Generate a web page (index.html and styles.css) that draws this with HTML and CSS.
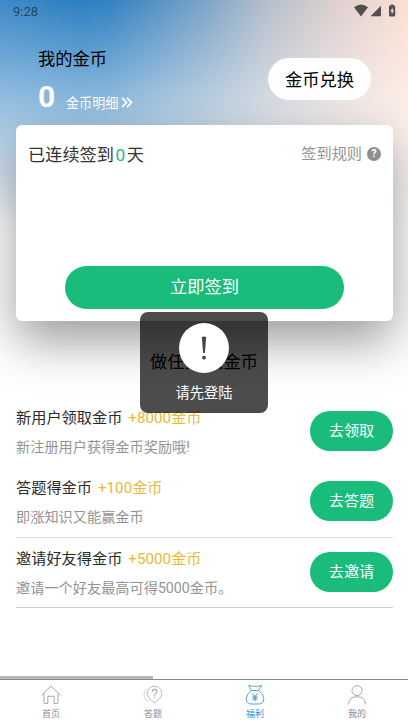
FILE: index.html
```html
<!DOCTYPE html>
<html lang="zh-CN">
<head>
<meta charset="utf-8">
<title>福利</title>
<link rel="stylesheet" href="styles.css">
</head>
<body>
<div class="app">
  <div class="status">
    <span class="time">9:28</span>
    <svg class="status-icons" width="42" height="14" viewBox="0 0 42 14" fill="#505050">
      <path d="M0 3.2Q7-2.2 14 3.2L7 12.4Z"/>
      <path d="M27 1.8V12.2H16.5Z"/>
      <path d="M35.8 1.4h1V.4h2.600v1h1q.8 0 .8.8v9.400q0 .8-.8.8h-4.600q-.8 0-.8-.8V2.200q0-.8.8-.8z"/>
      <path d="M38.700 3.200l-2.500 4.300h1.500v3.100l2.500-4.300h-1.500z" fill="#e5d9d7"/>
    </svg>
  </div>
  <header class="header">
    <div class="balance">
      <div class="balance-title">我的金币</div>
      <div class="balance-row">
        <span class="amount">0</span>
        <span class="detail">金币明细</span>
        <svg class="arrows" width="12" height="11" viewBox="0 0 12 11" fill="none" stroke="#fff" stroke-width="1.700"><path d="M1 .8l4.500 4.700L1 10.200M6 .8l4.500 4.700L6 10.200"/></svg>
      </div>
    </div>
    <div class="exchange">金币兑换</div>
  </header>
  <section class="card">
    <div class="card-head">
      <div class="streak">已连续签到<span class="days">0</span>天</div>
      <div class="rules">签到规则<span class="help">?</span></div>
    </div>
    <div class="sign">立即签到</div>
  </section>
  <h2 class="tasks-title">做任务 赚金币</h2>
  <main class="tasks">
    <div class="task first">
      <div><div class="name">新用户领取金币<span class="coins">+8000金币</span></div><div class="desc">新注册用户获得金币奖励哦!</div></div>
      <div class="go">去领取</div>
    </div>
    <div class="task">
      <div><div class="name">答题得金币<span class="coins">+100金币</span></div><div class="desc">即涨知识又能赢金币</div></div>
      <div class="go">去答题</div>
    </div>
    <div class="task last">
      <div><div class="name">邀请好友得金币<span class="coins">+5000金币</span></div><div class="desc">邀请一个好友最高可得5000金币。</div></div>
      <div class="go">去邀请</div>
    </div>
  </main>
  <div class="progress"></div>
  <nav class="tabs">
    <div class="tab">
      <svg width="22" height="22" viewBox="0 0 22 22" fill="none" stroke="#a9a9a9"><path d="M1.200 11.500L11 2l9.800 9.500M4 9.500v9.300q0 .7.700.7h3.100v-7.200h6.400v7.200h3.100q.7 0 .7-.7V9.500"/></svg>
      <span>首页</span>
    </div>
    <div class="tab">
      <svg width="22" height="22" viewBox="0 0 22 22" fill="none" stroke="#a9a9a9"><path d="M12.500 19L9.200 16A7.300 7.300 0 1 1 15.800 16Z" stroke-width=".8"/><path d="M10.100 7.800q.1-2.500 2.500-2.500t2.400 2.300q0 1.300-1.400 2.100-1 .6-1 1.900M12.600 12.800v1.200" stroke="#888"/><path d="M4.500 5.500Q1.500 8 2.200 12t5.300 5.500" stroke-width=".8" stroke-dasharray="2 1"/></svg>
      <span>答题</span>
    </div>
    <div class="tab active">
      <svg width="22" height="22" viewBox="0 0 22 22" fill="none" stroke="#3b8ccc"><path d="M7.500 6.500L4.500 1.500l4 .8h5.200l4-.8-3.200 5M7.500 6.500h7q5.300 3.300 5.300 8.200 0 5.300-5.300 5.300H7.500q-5.300 0-5.300-5.300Q2.200 9.800 7.500 6.500Z" stroke-width=".8"/><path d="M8.400 9.500l2.600 3 2.600-3M11 12.500v4.800M8.300 13h5.400M8.300 15h5.400"/></svg>
      <span>福利</span>
    </div>
    <div class="tab">
      <svg width="22" height="22" viewBox="0 0 22 22" fill="none" stroke="#a9a9a9"><circle cx="11" cy="6.600" r="5"/><path d="M2.700 20.500v-1.300q.5-6.500 8.300-6.500t8.300 6.500v1.300"/></svg>
      <span>我的</span>
    </div>
  </nav>
  <div class="toast">
    <div class="toast-icon"><svg width="8" height="26" viewBox="0 0 8 26" fill="#484848"><path d="M1.800 2Q4 .8 6.200 2L4.900 18H3.100Z"/><circle cx="4" cy="22.700" r="1.900"/></svg></div>
    <div>请先登陆</div>
  </div>
</div>
</body>
</html>
```
FILE: styles.css
```css
* { box-sizing: border-box; }
body {
  margin: 0;
  font-family: Roboto, "Noto Sans CJK SC", sans-serif;
  font-weight: 400;
  color: #2a2a2a;
  background: #fff;
}
.app {
  position: relative;
  display: flex;
  flex-direction: column;
  width: 408px;
  height: 725px;
  overflow: hidden;
  background:
    linear-gradient(180deg, rgba(255,255,255,0) 0, rgba(255,255,255,.56) 125px, #fff 225px),
    linear-gradient(90deg, #3d8ac8 0, #2c7fc1 80px, #3282c2 110px, #7ba4c8 204px, #b7bfcb 270px, #dfd1cf 340px, #fbdfd3 408px);
}
.status {
  display: flex;
  justify-content: space-between;
  height: 24px;
  padding: 4px 12px 0 13px;
}
.time { font-size: 13px; line-height: 16px; color: #254660; }
.status-icons { display: block; }
.header {
  display: flex;
  justify-content: space-between;
  height: 101px;
  padding: 22px 37px 0 38px;
}
.balance-title { font-size: 17.300px; line-height: 26px; color: #000; }
.balance-row { display: flex; align-items: center; height: 48px; color: #fff; }
.amount { width: 28px; font-size: 30px; font-weight: 700; }
.detail { margin-top: 12px; font-size: 13.100px; }
.arrows { margin: 12px 0 0 3px; }
.exchange {
  width: 103px;
  height: 42px;
  margin-top: 12px;
  border-radius: 21px;
  background: #fff;
  color: #000;
  font-size: 17.300px;
  line-height: 44px;
  text-align: center;
}
.card {
  flex: none;
  width: 377px;
  height: 196px;
  margin: 0 0 0 16px;
  padding: 15px 12px 0;
  border-radius: 6px;
  background: #fff;
  box-shadow: 0 20px 50px rgba(0,0,0,.4);
}
.card-head { display: flex; justify-content: space-between; height: 126px; line-height: 30px; }
.streak { font-size: 17.200px; color: #333; }
.days { margin: 0 1.500px; color: #19bd7c; }
.rules { display: flex; align-items: center; height: 28px; font-size: 15.200px; color: #949494; }
.help {
  width: 14px;
  height: 14px;
  margin-left: 5px;
  border-radius: 50%;
  background: #8e8e8e;
  color: #fff;
  font-size: 11px;
  font-weight: 700;
  line-height: 14px;
  text-align: center;
}
.sign {
  width: 279px;
  height: 43px;
  margin-left: 37px;
  border-radius: 22px;
  background: #19bc7b;
  color: #fff;
  font-size: 17.300px;
  line-height: 42px;
  text-align: center;
}
.tasks-title {
  height: 76px;
  margin: 0;
  padding-top: 28px;
  font-size: 17.300px;
  font-weight: inherit;
  line-height: 26px;
  color: #000;
  text-align: center;
}
.tasks { height: 279px; padding: 0 15px 0 16px; }
.task {
  display: flex;
  justify-content: space-between;
  align-items: flex-start;
  height: 70.500px;
  padding-top: 7px;
  border-bottom: 1px solid #dedede;
}
.task.first { border-bottom-color: transparent; height: 70px; }
.task.last { border-bottom-color: #cecece; }
.name { font-size: 15.200px; line-height: 29px; }
.coins { margin-left: 6px; color: #e9b934; }
.desc { font-size: 14.200px; line-height: 29px; color: #949494; }
.go {
  width: 83px;
  height: 40px;
  margin-top: 7px;
  border-radius: 20px;
  background: #19bc7b;
  color: #fff;
  font-size: 15.200px;
  line-height: 41px;
  text-align: center;
}
.progress { width: 153px; height: 3px; background: #b8b8b8; }
.tabs { display: flex; height: 46px; border-top: 1px solid #888; background: #fff; }
.tab {
  display: flex;
  flex: 1;
  flex-direction: column;
  align-items: center;
  padding-top: 4px;
  font-size: 9px;
  line-height: 16px;
  color: #88889a;
}
.tab svg { display: block; flex: none; }
.tab.active { color: #3b8ccc; }
.toast {
  position: absolute;
  left: 140px;
  top: 312px;
  display: flex;
  flex-direction: column;
  align-items: center;
  width: 128px;
  height: 101px;
  padding-top: 11px;
  border-radius: 8px;
  background: rgba(0,0,0,.7);
  color: #fff;
  font-size: 14.300px;
  line-height: 40px;
}
.toast-icon {
  display: flex;
  flex: none;
  align-items: center;
  justify-content: center;
  width: 50px;
  height: 50px;
  border-radius: 50%;
  background: #fff;
}
```
